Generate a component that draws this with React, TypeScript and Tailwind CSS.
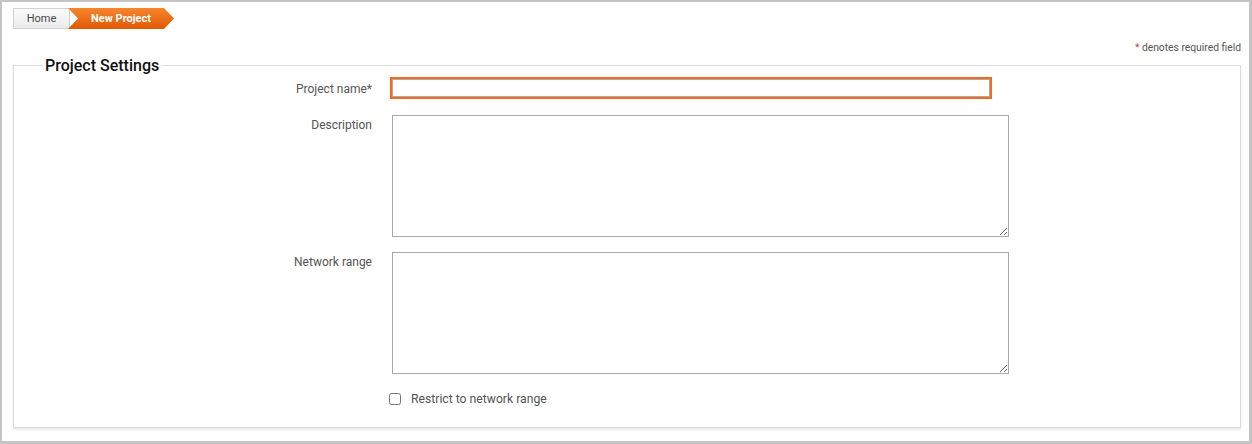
import type { ReactElement } from "react";

// Breadcrumb trail at the top of the page
function Breadcrumb(): ReactElement {
	return (
		<div className="flex h-[21px] items-stretch text-[11px] leading-none">
			<div className="flex w-[57px] items-center justify-center border border-[#d2d2d2] bg-gradient-to-b from-[#fbfbfb] to-[#ebebeb] text-[#4a4a4a]">
				Home
			</div>
			<div className="-ml-[2px] flex w-[106px] items-center justify-center bg-gradient-to-b from-[#f7852a] to-[#e05800] px-[10px] font-bold text-white [clip-path:polygon(0_0,96px_0,106px_50%,96px_100%,0_100%,10px_50%)]">
				New Project
			</div>
		</div>
	);
}

function FieldLabel({ children }: { children: string }): ReactElement {
	return (
		<label className="w-[358px] shrink-0 pt-[2px] text-right text-[12px] leading-4 text-[#555]">
			{children}
		</label>
	);
}

export default function App(): ReactElement {
	return (
		<div className="h-screen w-full border-t-2 border-l-2 border-r-[3px] border-b-[3px] border-[#c4c4c4] bg-white pl-[11px] pr-[8px] pt-[6px] font-['Roboto','Liberation_Sans',sans-serif]">
			<Breadcrumb />

			<div className="mt-[12px] text-right text-[10.3px] leading-[13px] text-[#555]">
				<span className="text-[#b0503a]">*</span> denotes required field
			</div>

			<fieldset className="border border-[#dcdcdc] pb-[20px] shadow-[0_2px_2px_rgba(0,0,0,0.08)]">
				<legend className="ml-[29px] px-[2px] text-[16px] font-medium leading-[22px] text-[#111]">
					<span className="relative top-[1px]">Project Settings</span>
				</legend>

				<div className="mt-[3px] flex items-center gap-[20px]">
					<FieldLabel>Project name*</FieldLabel>
					<input
						type="text"
						className="h-[18px] w-[598px] border border-[#a9a9a9] bg-white outline-2 outline-solid outline-[#f26b1f]"
					/>
				</div>

				<div className="mt-[18px] flex items-start gap-[20px]">
					<FieldLabel>Description</FieldLabel>
					<textarea className="h-[122px] w-[617px] border border-[#a9a9a9] bg-white" />
				</div>

				<div className="mt-[15px] flex items-start gap-[20px]">
					<FieldLabel>Network range</FieldLabel>
					<textarea className="h-[122px] w-[617px] border border-[#a9a9a9] bg-white" />
				</div>

				<div className="mt-[17px] flex items-center pl-[375px]">
					<input type="checkbox" className="m-0 h-[12px] w-[12px]" />
					<span className="ml-[10px] text-[12.2px] leading-4 text-[#555]">
						Restrict to network range
					</span>
				</div>
			</fieldset>
		</div>
	);
}
